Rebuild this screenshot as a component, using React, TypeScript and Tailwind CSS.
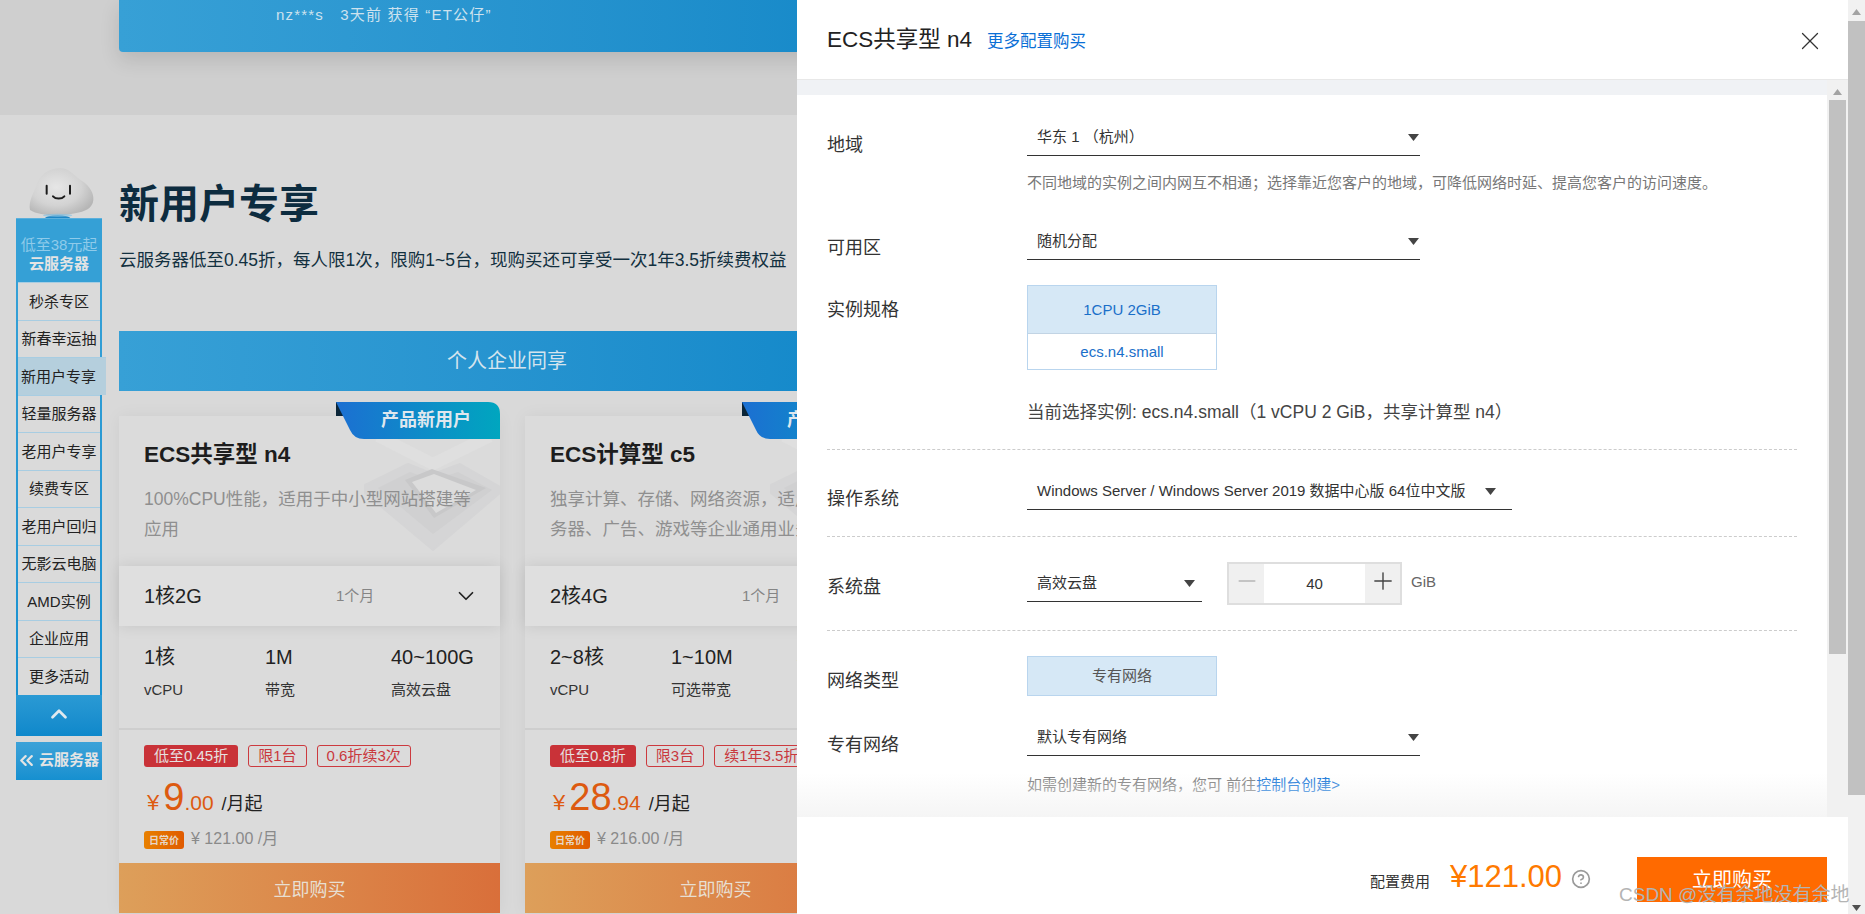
import { ChevronDown, ChevronUp, ChevronsLeft, CircleHelp, Minus, Plus, X } from 'lucide-react';

const sans = '[font-family:"Liberation_Sans","Noto_Sans_CJK_SC",sans-serif]';

const navItems = ['秒杀专区', '新春幸运抽', '新用户专享', '轻量服务器', '老用户专享', '续费专区', '老用户回归', '无影云电脑', 'AMD实例', '企业应用', '更多活动'];

const cards = [
  {
    name: 'ECS共享型 n4',
    desc: ['100%CPU性能，适用于中小型网站搭建等', '应用'],
    plan: '1核2G',
    specs: [['1核', 'vCPU'], ['1M', '带宽'], ['40~100G', '高效云盘']],
    sale: '低至0.45折',
    tags: ['限1台', '0.6折续3次'],
    price: '9',
    cents: '.00',
    regular: '¥ 121.00 /月',
  },
  {
    name: 'ECS计算型 c5',
    desc: ['独享计算、存储、网络资源，适用于Web服', '务器、广告、游戏等企业通用业务'],
    plan: '2核4G',
    specs: [['2~8核', 'vCPU'], ['1~10M', '可选带宽'], ['40~100G', '高效云盘']],
    sale: '低至0.8折',
    tags: ['限3台', '续1年3.5折'],
    price: '28',
    cents: '.94',
    regular: '¥ 216.00 /月',
  },
];

function Mascot() {
  return (
    <svg width="100" height="70" viewBox="0 0 300 210" className="absolute -left-[6px] -top-[58px]">
      <defs>
        <radialGradient id="cloud" cx="42%" cy="40%" r="65%">
          <stop offset="0%" stopColor="#e6e6e6" />
          <stop offset="60%" stopColor="#d3d3d3" />
          <stop offset="100%" stopColor="#b6b6b6" />
        </radialGradient>
      </defs>
      <path d="M60 150C55 125 70 100 78 80C88 45 115 25 150 25C180 25 195 50 215 62C240 78 252 100 250 120C248 145 225 155 195 160C160 168 90 170 60 150Z" fill="url(#cloud)" />
      <path d="M110 77v24M180 77v24" stroke="#1c1c1c" strokeWidth="6" strokeLinecap="round" />
      <path d="M129 109c8 9 26 9 34 0" stroke="#1c1c1c" strokeWidth="6" fill="none" strokeLinecap="round" />
      <ellipse cx="143" cy="175" rx="38" ry="9" fill="#1f86c4" />
      <ellipse cx="143" cy="166" rx="44" ry="5" fill="#7fbfe2" opacity="0.6" />
    </svg>
  );
}

function SideNav() {
  return (
    <div className="absolute left-[16px] top-[218px] w-[86px] z-10">
      <Mascot />
      <div className="bg-[#35a0d6] border-t border-[#5cb0dc] h-[64px] pt-[6px] flex flex-col items-center justify-center text-[15px] leading-[19px] whitespace-nowrap relative">
        <span className="text-[#8fcbea]">低至38元起</span>
        <span className="font-bold text-[#e4e4e4]">云服务器</span>
      </div>
      <div className="bg-gradient-to-b from-[#35a0d6] to-[#1590d0] px-[2px]">
        {navItems.map((item) => (
          <div
            key={item}
            className={
              item === '新用户专享'
                ? 'h-[37.5px] w-[88px] bg-[#b5cfdd] border-t border-[#a8cde2] flex items-center justify-center pt-[1px] text-[15px] text-[#222] pr-[7px] whitespace-nowrap relative'
                : 'h-[37.5px] bg-[#dadada] border-t border-[#a8cde2] flex items-center justify-center pt-[1px] text-[15px] text-[#222] whitespace-nowrap'
            }
          >
            {item}
          </div>
        ))}
      </div>
      <div className="h-[41px] bg-gradient-to-b from-[#2a9ad4] to-[#0e88cb] flex items-center justify-center">
        <ChevronUp size={26} strokeWidth={2.5} className="text-[#dfe9ef] -mt-[3px]" />
      </div>
      <div className="mt-[6px] h-[38px] bg-gradient-to-b from-[#3ca2d8] to-[#1590d0] flex items-center text-[15px] font-bold text-[#e4e4e4] whitespace-nowrap">
        <ChevronsLeft size={21} strokeWidth={2.5} className="shrink-0" />
        <span className="ml-[2px]">云服务器</span>
      </div>
    </div>
  );
}

function Cube() {
  return (
    <svg width="150" height="130" viewBox="0 0 150 130" className="absolute right-0 top-[14px]">
      <path d="M28 6L83 34L140 6" stroke="#dfdfdf" strokeWidth="12" fill="none" />
      <path d="M15 55L58 34L83 44L110 34L150 57V63L83 120L15 63Z" fill="#d5d5d6" stroke="#d5d5d6" strokeWidth="2" strokeLinejoin="round" />
      <path d="M28 58L60 42L83 50L108 42L142 60L83 104Z" fill="#d0d0d1" />
      <path d="M55 50L82 39L136 58L84 88Z" fill="#c8c8c9" />
      <path d="M62 52L84 44L126 60L86 83Z" fill="#dcdcdc" />
    </svg>
  );
}

function Ribbon() {
  return (
    <div className="absolute right-0 -top-[14px] w-[164px] h-[37px]">
      <svg width="164" height="37" viewBox="0 0 164 37" className="absolute inset-0">
        <defs>
          <linearGradient id="rib" x1="0" y1="0" x2="1" y2="0">
            <stop offset="0%" stopColor="#1c6fd2" />
            <stop offset="100%" stopColor="#00a6bf" />
          </linearGradient>
        </defs>
        <path d="M0 0L9 0V14H0Z" fill="#0b2538" />
        <path d="M0 0H152Q164 0 164 12V37H28Q18 37 14 28Z" fill="url(#rib)" />
      </svg>
      <span className="absolute left-[45px] top-0 h-full flex items-center text-[18px] font-bold text-[#dfe7ee] whitespace-nowrap">产品新用户</span>
    </div>
  );
}

function Card({ card }: { card: (typeof cards)[0] }) {
  return (
    <div className="w-[381px] h-[497px] shrink-0 bg-[#dbdbdb] shadow-[0_0_16px_rgba(0,0,0,0.05)] relative flex flex-col">
      <Cube />
      <Ribbon />
      <div className="h-[150px] pl-[25px] pt-[25px] relative">
        <h3 className="text-[22.5px] leading-[28px] font-bold text-[#1d1d1d]">{card.name}</h3>
        <div className="mt-[15px] text-[17.5px] leading-[30px] text-[#8f8f8f] whitespace-nowrap">
          {card.desc.map((line) => (
            <div key={line}>{line}</div>
          ))}
        </div>
      </div>
      <div className="h-[60px] bg-[#dfdfdf] shadow-[0_0_14px_rgba(0,0,0,0.1)] pl-[25px] flex items-center relative">
        <span className="w-[192px] text-[20px] text-[#222]">{card.plan}</span>
        <span className="text-[15px] text-[#858585]">1个月</span>
        <ChevronDown size={26} strokeWidth={1.6} className="ml-[79px] text-[#222]" />
      </div>
      <div className="h-[104px] border-b-2 border-[#cecece] pl-[25px] pt-[17px] grid grid-cols-[121px_126px_1fr] content-start text-[#222]">
        {card.specs.map(([value, label]) => (
          <div key={label}>
            <div className="text-[20px] leading-[28px]">{value}</div>
            <div className="mt-[9px] text-[15px] leading-[20px] text-[#333]">{label}</div>
          </div>
        ))}
      </div>
      <div className="pl-[25px] pt-[15px] flex items-center gap-[10px] text-[15px] whitespace-nowrap">
        <span className="h-[22px] px-[10px] rounded-[3px] bg-[#c93238] text-[#e6e0e0] flex items-center">{card.sale}</span>
        {card.tags.map((tag) => (
          <span key={tag} className="h-[22px] px-[9px] rounded-[3px] border border-[#cc3a3f] text-[#c9383d] flex items-center">
            {tag}
          </span>
        ))}
      </div>
      <div className="pl-[28px] mt-[7px] h-[46px] flex items-baseline text-[#dd5a10] whitespace-nowrap">
        <span className="text-[22px] mr-[4px]">¥</span>
        <span className="text-[38px] leading-[46px]">{card.price}</span>
        <span className="text-[21px]">{card.cents}</span>
        <span className="text-[18px] text-[#222] ml-[8px]">/月起</span>
      </div>
      <div className="pl-[25px] mt-[9px] flex items-center">
        <span className="h-[18px] w-[40px] rounded-[3px] bg-gradient-to-r from-[#e88000] to-[#e05a00] text-[10px] font-bold text-[#e6d7c8] flex items-center justify-center whitespace-nowrap">日常价</span>
        <span className="ml-[7px] text-[16px] text-[#8a8a8a] -mt-[2px]">{card.regular}</span>
      </div>
      <div className="mt-auto h-[50px] pt-[4px] bg-gradient-to-r from-[#dd9f5a] to-[#d96f3a] flex items-center justify-center text-[18px] text-[#e8dfd2]">立即购买</div>
    </div>
  );
}

function Caret() {
  return (
    <svg width="11" height="7" viewBox="0 0 11 7" className="shrink-0">
      <path d="M0 0H11L5.5 7Z" fill="#444" />
    </svg>
  );
}

function Select({ value, width, pr }: { value: string; width: string; pr: string }) {
  return (
    <div className={`${width} ${pr} h-[36px] border-b border-[#333] flex items-center justify-between pl-[10px] text-[15px] text-[#333] whitespace-pre shrink-0`}>
      <span>{value}</span>
      <Caret />
    </div>
  );
}

function Label({ children, top }: { children: string; top: string }) {
  return <div className={`w-[200px] shrink-0 text-[18px] leading-[28px] text-[#333] ${top}`}>{children}</div>;
}

function Dashed({ mt }: { mt: string }) {
  return <div className={`${mt} border-t border-dashed border-[#ccc]`} />;
}

function Drawer() {
  return (
    <div className="absolute left-[797px] right-0 top-0 bottom-0 bg-white flex flex-col z-20">
      <div className="h-[80px] shrink-0 border-b border-[#e8e8e8] pl-[30px] pr-[23px] flex items-center">
        <span className="text-[22.5px] text-[#222]">ECS共享型 n4</span>
        <span className="ml-[15px] text-[16.5px] text-[#0a6fd6] mt-[4px]">更多配置购买</span>
        <X size={30} strokeWidth={1} className="ml-auto text-[#333] mt-[2px]" />
      </div>
      <div className="flex-1 min-h-0 flex relative">
        <div className="flex-1 flex flex-col min-w-0">
          <div className="h-[15px] shrink-0 bg-[#f0f2f5]" />
          <div className="flex-1 min-h-0 px-[30px] pt-[25px] overflow-hidden relative">
            <div className="flex h-[36px]">
              <Label top="pt-[11px]">地域</Label>
              <Select value="华东 1 （杭州）" width="w-[393px]" pr="pr-[1px]" />
            </div>
            <div className="ml-[200px] mt-[17px] text-[15px] leading-[20px] text-[#777] whitespace-nowrap">不同地域的实例之间内网互不相通；选择靠近您客户的地域，可降低网络时延、提高您客户的访问速度。</div>
            <div className="flex h-[36px] mt-[31px]">
              <Label top="pt-[10px]">可用区</Label>
              <Select value="随机分配" width="w-[393px]" pr="pr-[1px]" />
            </div>
            <div className="flex mt-[25px]">
              <Label top="pt-[11px]">实例规格</Label>
              <div className="w-[190px] h-[85px] border border-[#b9d5ee] text-[15px] text-[#1a6fc9]">
                <div className="h-[48px] pt-[1px] bg-[#d6e8f6] border-b border-[#c2d4e4] flex items-center justify-center">1CPU 2GiB</div>
                <div className="h-[35px] pt-[2px] flex items-center justify-center">ecs.n4.small</div>
              </div>
            </div>
            <div className="ml-[200px] mt-[30px] text-[17.5px] leading-[24px] text-[#444] whitespace-nowrap">当前选择实例: ecs.n4.small（1 vCPU 2 GiB，共享计算型 n4）</div>
            <Dashed mt="mt-[25px]" />
            <div className="flex h-[36px] mt-[24px]">
              <Label top="pt-[11px]">操作系统</Label>
              <Select value="Windows Server / Windows Server 2019 数据中心版 64位中文版" width="w-[485px]" pr="pr-[16px]" />
            </div>
            <Dashed mt="mt-[26px]" />
            <div className="flex h-[36px] mt-[29px]">
              <Label top="pt-[7px]">系统盘</Label>
              <Select value="高效云盘" width="w-[175px]" pr="pr-[7px]" />
              <div className="ml-[25px] -mt-[4px] w-[175px] h-[43px] border-2 border-[#dedede] flex text-[15px] text-[#333] shrink-0">
                <div className="w-[35px] bg-[#f0f0f0] flex items-center justify-center text-[#c4c4c4]">
                  <Minus size={26} strokeWidth={1.8} className="-mt-[6px]" />
                </div>
                <div className="flex-1 flex items-center justify-center pt-[2px]">40</div>
                <div className="w-[35px] bg-[#f0f0f0] flex items-center justify-center text-[#444]">
                  <Plus size={28} strokeWidth={1.2} className="-mt-[6px]" />
                </div>
              </div>
              <span className="ml-[9px] text-[15px] leading-[32px] text-[#666]">GiB</span>
            </div>
            <Dashed mt="mt-[28px]" />
            <div className="flex mt-[25px]">
              <Label top="pt-[11px]">网络类型</Label>
              <div className="w-[190px] h-[40px] bg-[#d6e8f6] border border-[#b9d5ee] flex items-center justify-center text-[15px] text-[#555]">专有网络</div>
            </div>
            <div className="flex h-[36px] mt-[24px]">
              <Label top="pt-[11px]">专有网络</Label>
              <Select value="默认专有网络" width="w-[393px]" pr="pr-[1px]" />
            </div>
            <div className="ml-[200px] mt-[19px] text-[15px] leading-[20px] text-[#777] whitespace-pre">
              如需创建新的专有网络，您可 前往<span className="text-[#0a6fd6]">控制台创建&gt;</span>
            </div>
            <div className="absolute left-0 right-0 bottom-0 h-[44px] bg-gradient-to-b from-white/0 to-[#f5f5f5]" />
          </div>
        </div>
        <div className="w-[21px] shrink-0 bg-[#f1f1f1] flex flex-col items-center pt-[9px]">
          <svg width="9" height="6" viewBox="0 0 9 6" className="shrink-0">
            <path d="M0 6L4.5 0L9 6Z" fill="#a3a3a3" />
          </svg>
          <div className="mt-[5px] w-[17px] h-[554px] bg-[#c1c1c1]" />
        </div>
      </div>
      <div className="h-[97px] shrink-0 pr-[21px] pt-[40px] flex justify-end items-start">
        <span className="text-[15px] leading-[20px] text-[#333] mt-[15px]">配置费用</span>
        <span className="ml-[20px] text-[31px] leading-[40px] text-[#ff7a00]">¥121.00</span>
        <CircleHelp size={20} strokeWidth={2} className="ml-[9px] mt-[12px] text-[#9a9a9a]" />
        <div className="ml-[46px] w-[190px] h-[45px] bg-[#ff6a00] flex items-center justify-center text-[20px] text-white">立即购买</div>
      </div>
    </div>
  );
}

export default function App() {
  return (
    <div className={`relative h-[914px] w-full overflow-hidden flex bg-[#d9d9d9] ${sans}`}>
      <div className="flex-1 min-w-0 relative overflow-hidden">
        <div className="h-[115px] bg-[#cfcfcf] pl-[119px]">
          <div className="w-[776px] h-[52px] rounded-b-[4px] bg-gradient-to-r from-[#37a0d6] to-[#1388c8] shadow-[0_8px_20px_rgba(0,0,0,0.12)] pl-[157px] pt-[5px] text-[15px] leading-[20px] tracking-[1.2px] text-[#cde2ee] whitespace-pre">
            nz***s   3天前 获得 “ET公仔”
          </div>
        </div>
        <div className="pl-[119px] pt-[65px]">
          <h2 className="text-[40px] leading-[48px] font-bold text-[#0d2c3f]">新用户专享</h2>
          <p className="mt-[20px] text-[17.5px] leading-[24px] text-[#12303f] whitespace-nowrap">云服务器低至0.45折，每人限1次，限购1~5台，现购买还可享受一次1年3.5折续费权益</p>
          <div className="mt-[59px] w-[776px] h-[60px] bg-gradient-to-r from-[#37a0d6] to-[#0f87c9] flex items-center justify-center text-[20px] text-[#d5e4ee]">个人企业同享</div>
          <div className="mt-[25px] flex gap-[25px]">
            {cards.map((card) => (
              <Card key={card.name} card={card} />
            ))}
          </div>
        </div>
        <SideNav />
        <Drawer />
      </div>
      <div className="w-[17px] shrink-0 bg-[#f1f1f1] flex flex-col items-center pt-[9px] pb-[3px]">
        <svg width="9" height="6" viewBox="0 0 9 6" className="shrink-0">
          <path d="M0 6L4.5 0L9 6Z" fill="#a3a3a3" />
        </svg>
        <div className="mt-[6px] w-[17px] h-[774px] bg-[#c1c1c1]" />
        <svg width="9" height="6" viewBox="0 0 9 6" className="mt-auto shrink-0">
          <path d="M0 0L4.5 6L9 0Z" fill="#505050" />
        </svg>
      </div>
      <div className="absolute left-[1619px] top-[881px] z-30 text-[19px] leading-[28px] text-[#b4b4b4] whitespace-nowrap">CSDN @没有余地没有余地</div>
    </div>
  );
}
